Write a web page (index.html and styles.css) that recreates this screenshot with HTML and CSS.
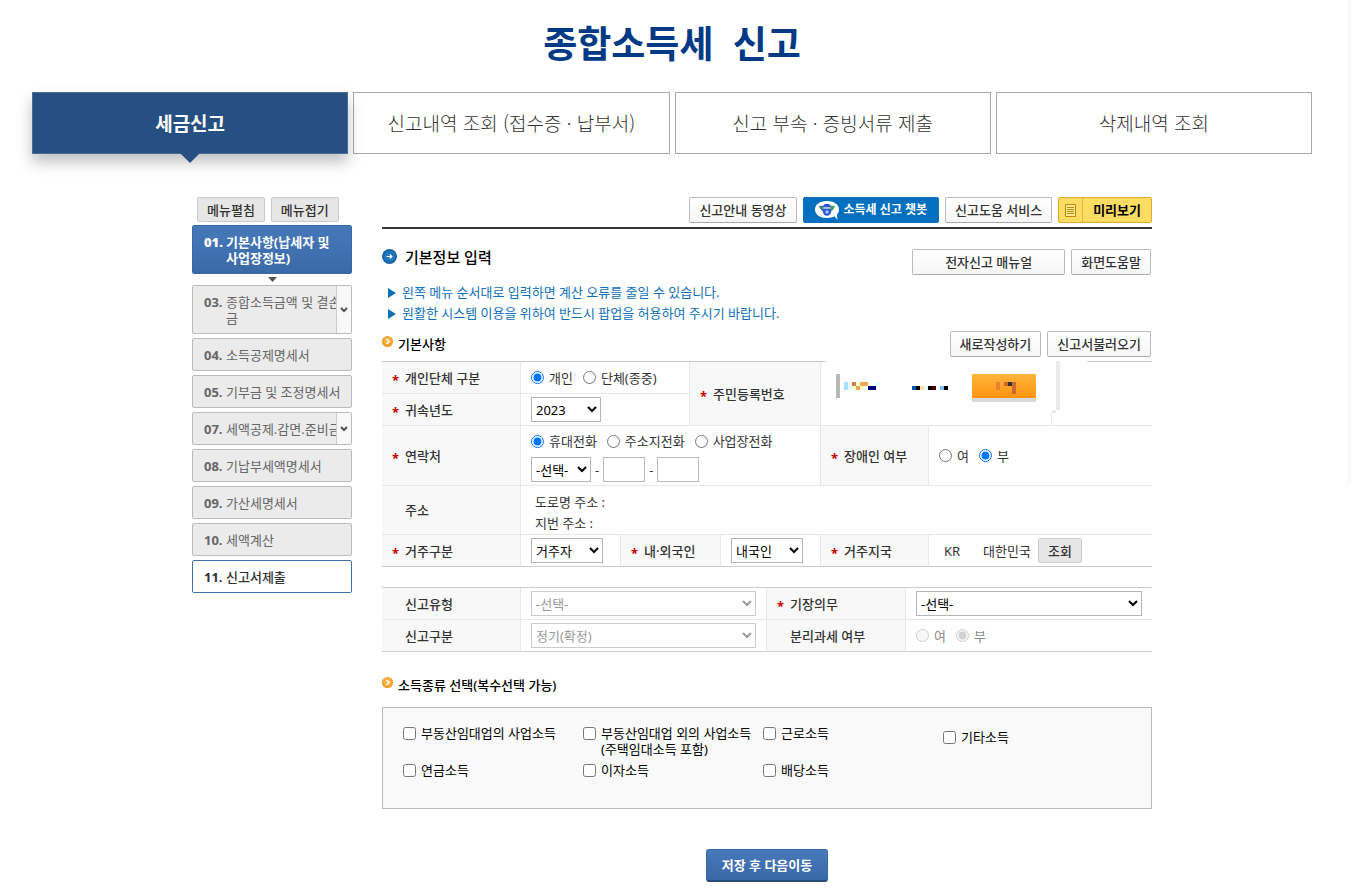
FILE: index.html
```html
<!DOCTYPE html>
<html lang="ko">
<head>
<meta charset="utf-8">
<title>종합소득세 신고</title>
<link rel="stylesheet" href="styles.css">
</head>
<body>
<div class="page">
  <h1 class="page-title">종합소득세&nbsp; 신고</h1>

  <nav class="tabs">
    <a class="tab tab-active" href="#">세금신고</a>
    <a class="tab" href="#">신고내역 조회 (접수증 · 납부서)</a>
    <a class="tab" href="#">신고 부속 · 증빙서류 제출</a>
    <a class="tab" href="#">삭제내역 조회</a>
  </nav>

  <div class="layout">
    <aside class="sidebar">
      <div class="side-tools">
        <button class="btn btn-gray" type="button">메뉴펼침</button>
        <button class="btn btn-gray" type="button">메뉴접기</button>
      </div>
      <ul class="steps">
        <li class="step-current">
          <a class="step step-active" href="#"><b class="num">01.</b><span class="step-name">기본사항(납세자 및 사업장정보)</span></a>
          <svg class="step-arrow" viewBox="0 0 9 5"><path d="M0 0h9L4.500 5z" fill="#555"/></svg>
        </li>
        <li><a class="step" href="#"><b class="num">03.</b><span class="step-name">종합소득금액 및 결손금</span><span class="expand"><svg viewBox="0 0 8 6"><path d="M1 1l3 3 3-3" fill="none" stroke="#555" stroke-width="2"/></svg></span></a></li>
        <li><a class="step" href="#"><b class="num">04.</b><span class="step-name">소득공제명세서</span></a></li>
        <li><a class="step" href="#"><b class="num">05.</b><span class="step-name">기부금 및 조정명세서</span></a></li>
        <li><a class="step" href="#"><b class="num">07.</b><span class="step-name">세액공제.감면.준비금</span><span class="expand"><svg viewBox="0 0 8 6"><path d="M1 1l3 3 3-3" fill="none" stroke="#555" stroke-width="2"/></svg></span></a></li>
        <li><a class="step" href="#"><b class="num">08.</b><span class="step-name">기납부세액명세서</span></a></li>
        <li><a class="step" href="#"><b class="num">09.</b><span class="step-name">가산세명세서</span></a></li>
        <li><a class="step" href="#"><b class="num">10.</b><span class="step-name">세액계산</span></a></li>
        <li><a class="step step-submit" href="#"><b class="num">11.</b><span class="step-name">신고서제출</span></a></li>
      </ul>
    </aside>

    <main class="content">
      <div class="toolbar">
        <button class="btn" type="button">신고안내 동영상</button>
        <button class="btn btn-chat" type="button">
          <svg class="bot" viewBox="0 0 24 20"><path d="M12 1C5 1 0 4.500 0 9.500S5 18 12 18c3 0 5.500-.6 7.500-1.700L22.500 20 22 14.500c1.300-1.400 2-3.100 2-5C24 4.500 19 1 12 1z" fill="#fff"/><path d="M4.500 6.500l4-.5 1 3-2.500 1.500z" fill="#3d9a63" stroke="#3456cf" stroke-width="1"/><path d="M19.500 6.500l-4-.5-1 3 2.500 1.500z" fill="#3d9a63" stroke="#3d9a63" stroke-width="1"/><path d="M8.500 6c0-3 7-3 7 0v1.500h-7z" fill="#344fd8"/><circle cx="12" cy="11.500" r="4.200" fill="#3155d6"/><path d="M8.500 8h7" stroke="#d6ecff" stroke-width="1.300"/><circle cx="12" cy="12" r="1.700" fill="#9cc9ff"/></svg>
          소득세 신고 챗봇</button>
        <button class="btn" type="button">신고도움 서비스</button>
        <button class="btn btn-preview" type="button">
          <span class="preview-icon"><svg viewBox="0 0 11 13"><path d="M.5.5h10v12H.5z" fill="#ffe98e" stroke="#b88b10"/><path d="M2 3.500h7M2 5.500h7M2 7.500h7M2 9.500h7" stroke="#b88b10"/></svg></span>
          <span class="preview-text">미리보기</span></button>
      </div>

      <div class="head">
        <h2 class="head-title">
          <svg class="head-icon" viewBox="0 0 15 15"><circle cx="7.500" cy="7.500" r="7.500" fill="#155f9f"/><circle cx="7.500" cy="7.500" r="6" fill="#1f78b8"/><path d="M4.500 7.500h5M7.800 5.500l2 2-2 2" fill="none" stroke="#fff" stroke-width="1.200"/></svg>
          기본정보 입력</h2>
        <div class="actions">
          <button class="btn btn-manual" type="button">전자신고 매뉴얼</button>
          <button class="btn" type="button">화면도움말</button>
        </div>
      </div>

      <ul class="notes">
        <li><svg viewBox="0 0 8 10"><path d="M0 0l8 5-8 5z" fill="#0f70b7"/></svg>왼쪽 메뉴 순서대로 입력하면 계산 오류를 줄일 수 있습니다.</li>
        <li><svg viewBox="0 0 8 10"><path d="M0 0l8 5-8 5z" fill="#0f70b7"/></svg>원활한 시스템 이용을 위하여 반드시 팝업을 허용하여 주시기 바랍니다.</li>
      </ul>

      <div class="subhead">
        <h3 class="sub-title">
          <svg class="sub-icon" viewBox="0 0 11 11"><circle cx="5.500" cy="5.500" r="5.500" fill="#f39a1f"/><circle cx="5.500" cy="5" r="4.300" fill="#fbb040"/><path d="M4.500 3l2.500 2.500L4.500 8" fill="none" stroke="#fff" stroke-width="1.500"/></svg>
          기본사항</h3>
        <div class="actions">
          <button class="btn" type="button">새로작성하기</button>
          <button class="btn" type="button">신고서불러오기</button>
        </div>
      </div>

      <table class="form">
        <colgroup><col class="c-head"><col class="c-100"><col class="c-69"><col class="c-31"><col class="c-100"><col class="c-108"><col></colgroup>
        <tr class="row">
          <th><span class="req">*</span>개인단체 구분</th>
          <td colspan="2"><div class="field">
            <label class="opt"><input type="radio" name="kind" checked>개인</label>
            <label class="opt"><input type="radio" name="kind">단체(종중)</label></div></td>
          <th colspan="2" rowspan="2"><span class="req">*</span>주민등록번호</th>
          <td class="masked-cell" colspan="2" rowspan="2">
            <svg class="masked" viewBox="826 361 261 64" shape-rendering="crispEdges">
              <defs><linearGradient id="orange" x1="0" y1="0" x2="0" y2="1"><stop offset="0" stop-color="#ffb53c"/><stop offset="1" stop-color="#ff9410"/></linearGradient></defs>
              <path d="M826 361h261v2H826z" fill="#fff"/>
              <path d="M836 374h4v24h-4z" fill="#b8b8b8"/>
              <path d="M844 382h4v8h-4z" fill="#a8e0ff"/>
              <path d="M848 386h4v4h-4zM876 382h4v4h-4z" fill="#e0ffff"/>
              <path d="M852 382h4v4h-4z" fill="#c88050"/>
              <path d="M856 382h4v4h-4zM852 386h4v4h-4zM860 386h4v4h-4z" fill="#ffffd0"/>
              <path d="M860 382h8v4h-8zM856 386h4v4h-4z" fill="#e8a850"/>
              <path d="M868 386h8v4h-8z" fill="#000080"/>
              <path d="M912 386h4v4h-4z" fill="#0055a8"/>
              <path d="M916 386h4v4h-4zM928 386h4v4h-4zM944 386h4v4h-4z" fill="#000"/>
              <path d="M920 386h4v4h-4z" fill="#ffe0a0"/><path d="M924 386h4v4h-4z" fill="#e0ffff"/>
              <path d="M932 386h4v4h-4z" fill="#500000"/><path d="M940 386h4v4h-4z" fill="#80c0ff"/>
              <path d="M972 374h64v24h-64z" fill="url(#orange)"/><path d="M972 398h64v4h-64z" fill="#d8d8d8"/>
              <path d="M996 382h4v8h-4z" fill="#f08030"/><path d="M1004 382h4v4h-4zM1012 382h4v12h-4z" fill="#cf6730"/>
              <path d="M1008 382h4v4h-4z" fill="#333"/>
              <path d="M1056 361h4v49h-4zM1052 410h4v3h-4zM1051 413h1v12h-1z" fill="#ebebeb"/>
            </svg>
          </td>
        </tr>
        <tr class="row">
          <th><label for="year"><span class="req">*</span>귀속년도</label></th>
          <td colspan="2"><div class="field"><select id="year" class="sel w-70"><option>2023</option></select></div></td>
        </tr>
        <tr class="row-contact">
          <th><span class="req">*</span>연락처</th>
          <td colspan="4">
            <div class="field stack">
              <div class="line">
                <label class="opt"><input type="radio" name="tel" checked>휴대전화</label>
                <label class="opt"><input type="radio" name="tel">주소지전화</label>
                <label class="opt"><input type="radio" name="tel">사업장전화</label>
              </div>
              <div class="line phone">
                <select class="sel w-60" aria-label="국번"><option>-선택-</option></select>-<input class="txt" type="text" aria-label="전화번호 앞자리">-<input class="txt" type="text" aria-label="전화번호 뒷자리">
              </div>
            </div>
          </td>
          <th><span class="req">*</span>장애인 여부</th>
          <td><div class="field">
            <label class="opt"><input type="radio" name="dis">여</label>
            <label class="opt"><input type="radio" name="dis" checked>부</label></div></td>
        </tr>
        <tr class="row-address">
          <th><span class="req"></span>주소</th>
          <td colspan="6" class="addr-cell"><p class="addr">도로명 주소 :</p><p class="addr">지번 주소 :</p></td>
        </tr>
        <tr class="row">
          <th><label for="reside"><span class="req">*</span>거주구분</label></th>
          <td><div class="field"><select id="reside" class="sel w-72"><option>거주자</option></select></div></td>
          <th colspan="2"><label for="nation"><span class="req">*</span>내·외국인</label></th>
          <td><div class="field"><select id="nation" class="sel w-72"><option>내국인</option></select></div></td>
          <th><span class="req">*</span>거주지국</th>
          <td><div class="field country"><span class="code">KR</span><span class="name">대한민국</span><button class="btn btn-gray" type="button">조회</button></div></td>
        </tr>
      </table>

      <table class="form form-type">
        <colgroup><col class="c-head"><col class="c-246"><col class="c-139"><col></colgroup>
        <tr class="row">
          <th><label for="type"><span class="req"></span>신고유형</label></th>
          <td><div class="field"><select id="type" class="sel w-full" disabled><option>-선택-</option></select></div></td>
          <th><label for="book"><span class="req">*</span>기장의무</label></th>
          <td><div class="field"><select id="book" class="sel w-full"><option>-선택-</option></select></div></td>
        </tr>
        <tr class="row">
          <th><label for="period"><span class="req"></span>신고구분</label></th>
          <td><div class="field"><select id="period" class="sel w-full" disabled><option>정기(확정)</option></select></div></td>
          <th><span class="req"></span>분리과세 여부</th>
          <td><div class="field">
            <label class="opt opt-off"><input type="radio" name="sep" disabled>여</label>
            <label class="opt opt-off"><input type="radio" name="sep" disabled checked>부</label></div></td>
        </tr>
      </table>

      <h3 class="sub-title sub-income">
        <svg class="sub-icon" viewBox="0 0 11 11"><circle cx="5.500" cy="5.500" r="5.500" fill="#f39a1f"/><circle cx="5.500" cy="5" r="4.300" fill="#fbb040"/><path d="M4.500 3l2.500 2.500L4.500 8" fill="none" stroke="#fff" stroke-width="1.500"/></svg>
        소득종류 선택(복수선택 가능)</h3>

      <div class="income">
        <label class="check"><input type="checkbox"><span>부동산임대업의 사업소득</span></label>
        <label class="check"><input type="checkbox"><span>부동산임대업 외의 사업소득<br>(주택임대소득 포함)</span></label>
        <label class="check"><input type="checkbox"><span>근로소득</span></label>
        <label class="check check-other"><input type="checkbox"><span>기타소득</span></label>
        <label class="check"><input type="checkbox"><span>연금소득</span></label>
        <label class="check"><input type="checkbox"><span>이자소득</span></label>
        <label class="check"><input type="checkbox"><span>배당소득</span></label>
      </div>

      <div class="submit"><button class="btn-next" type="button">저장 후 다음이동</button></div>
    </main>
  </div>
</div>
</body>
</html>
```
FILE: styles.css
```css
* { box-sizing: border-box; }

body {
  margin: 0;
  background: #fff;
  color: #333;
  font: 13px/16px "Noto Sans", "Noto Sans CJK KR", sans-serif;
}

ul, h1, h2, h3, p { margin: 0; padding: 0; }
ul { list-style: none; }
a { color: inherit; text-decoration: none; }
svg { display: block; flex: none; }
button, input, select { font: inherit; color: inherit; margin: 0; }

.page { position: relative; padding: 0 39px 0 32px; }
.page::after {
  content: "";
  position: absolute;
  top: 0;
  right: 0;
  width: 6px;
  height: 484px;
  background: linear-gradient(to right, #fff, #f7f7f7);
}

.page-title {
  padding: 17px 0 21px;
  font-size: 37px;
  line-height: 54px;
  font-weight: 700;
  color: #003a85;
  text-align: center;
}

/* top tabs */
.tabs { display: grid; grid-template-columns: repeat(4, 1fr); gap: 5px; }
.tab {
  display: flex;
  align-items: center;
  justify-content: center;
  height: 62px;
  border: 1px solid #a9a9a9;
  background: #fff;
  font-family: "Noto Sans CJK KR", sans-serif;
  font-size: 19px;
  line-height: 28px;
  font-weight: 300;
}
.tab-active {
  position: relative;
  border-color: #4a6d98;
  background: #265081;
  color: #fff;
  font-weight: 700;
  box-shadow: 0 8px 14px rgba(0, 0, 0, .25);
}
.tab-active::after {
  content: "";
  position: absolute;
  top: 100%;
  left: 50%;
  margin-left: -10px;
  border: 10px solid transparent;
  border-top-color: #265081;
  border-bottom: 0;
}

.layout {
  display: grid;
  grid-template-columns: 160px minmax(0, 1fr);
  column-gap: 30px;
  max-width: 960px;
  margin: 43px auto 0;
}

/* buttons */
.btn {
  display: inline-flex;
  align-items: center;
  justify-content: center;
  height: 26px;
  padding: 0 9px;
  border: 1px solid #bbb;
  border-bottom-color: #aaa;
  border-radius: 2px;
  background: linear-gradient(#fff, #f6f6f6);
  font-weight: 500;
  white-space: nowrap;
}
.btn-gray { height: 25px; background: #e6e6e6; border-color: #ccc; }
.btn-manual { width: 153px; }
.btn-chat {
  gap: 5px;
  padding: 0 11px;
  border-color: #0a6db5;
  background: #0070be;
  color: #fff;
  font-size: 12px;
  font-weight: 700;
}
.btn-preview { padding: 0; border-color: #e0a92f; background: #ffdc62; color: #000; font-weight: 700; }
.preview-icon {
  display: flex;
  align-items: center;
  align-self: stretch;
  padding: 0 6px;
  border-right: 1px solid #eeb540;
}
.preview-icon svg { width: 11px; height: 13px; }
.preview-text { padding: 0 10px; }
.bot { width: 24px; height: 20px; }

/* sidebar */
.side-tools { display: flex; gap: 6px; padding-left: 5px; margin-bottom: 3px; }
.steps { display: flex; flex-direction: column; gap: 4px; }
.step {
  position: relative;
  display: flex;
  padding: 8px 4px 7px 11px;
  border: 1px solid #bbb;
  border-radius: 2px;
  background: #ebebeb;
  color: #666;
  overflow: hidden;
}
.num { flex: none; width: 22px; }
.step-name { flex: 1; word-break: break-all; }
.step-active {
  border-color: #3a68a6;
  background: linear-gradient(#4678b9, #3b6aa8);
  color: #fff;
  font-weight: 700;
}
.step-active .step-name { word-break: keep-all; }
.step-submit { border-color: #3b72b0; background: #fff; color: #333; font-weight: 500; }
.step-arrow { width: 9px; height: 5px; margin: 3px auto -1px; }
.expand {
  position: absolute;
  top: 0;
  right: 0;
  bottom: 0;
  display: flex;
  align-items: center;
  justify-content: center;
  width: 15px;
  border-left: 1px solid #ccc;
  background: #f8f8f8;
}
.expand svg { width: 8px; height: 6px; }

/* content header */
.toolbar {
  display: flex;
  justify-content: flex-end;
  gap: 6px;
  padding-bottom: 4px;
  border-bottom: 2px solid #333;
}
.head, .subhead { display: flex; justify-content: space-between; padding-right: 1px; }
.head { margin-top: 20px; }
.actions { display: flex; gap: 6px; }
.head-title {
  display: flex;
  gap: 8px;
  font-size: 15px;
  line-height: 16px;
  font-weight: 500;
  color: #000;
}
.head-icon { width: 15px; height: 15px; }
.notes { margin-top: 7px; color: #0f70b7; line-height: 21px; }
.notes li { display: flex; align-items: center; gap: 6px; padding-left: 6px; }
.notes svg { width: 8px; height: 10px; }
.subhead { margin-top: 7px; }
.sub-title {
  display: flex;
  gap: 5px;
  padding-top: 5px;
  font-size: 13px;
  line-height: 16px;
  font-weight: 500;
  color: #000;
}
.sub-icon { width: 11px; height: 11px; }

/* form tables */
.form {
  width: 100%;
  margin-top: 4px;
  table-layout: fixed;
  border-collapse: separate;
  border-spacing: 0;
  border-top: 1px solid #ccc;
}
.form th, .form td { padding: 0 10px; border-bottom: 1px solid #e8e8e8; text-align: left; }
.form th { background: #f8f8f8; font-weight: 500; white-space: nowrap; }
.form th + td, .form td + th { border-left: 1px solid #e8e8e8; }
.form tr:last-child th, .form tr:last-child td { border-bottom-color: #ccc; }
.form-type { margin-top: 20px; }
.c-head { width: 138px; }
.c-246 { width: 246px; }
.c-139 { width: 139px; }
.c-100 { width: 100px; }
.c-69 { width: 69px; }
.c-31 { width: 31px; }
.c-108 { width: 108px; }
.row { height: 32px; }
.row-contact { height: 60px; }
.row-address { height: 49px; }
.req {
  display: inline-block;
  width: 13px;
  height: 12px;
  vertical-align: middle;
  font-weight: 700;
  line-height: 14px;
  color: #c00;
}
.field, .line { display: flex; align-items: center; gap: 10px; }
.stack { flex-direction: column; align-items: flex-start; gap: 8px; padding-top: 4px; }
.phone { gap: 4px; }
.opt { display: flex; align-items: center; gap: 5px; white-space: nowrap; }
.opt input, .check input { width: 13px; height: 13px; flex: none; }
.opt-off { color: #888; }
.sel {
  height: 25px;
  padding: 0;
  border: 1px solid #b5b5b5;
  border-radius: 0;
  background-color: #fff;
  color: #000;
}
.sel:disabled { border-color: #ccc; color: #999; opacity: 1; }
.txt { width: 42px; height: 25px; padding: 0 4px; border: 1px solid #bbb; }
.w-60 { width: 60px; }
.w-70 { width: 70px; }
.w-72 { width: 72px; }
.w-full { width: 100%; }
.form .addr-cell { padding-top: 5px; }
.addr { padding-left: 4px; line-height: 21px; }
.country { gap: 0; padding-left: 5px; }
.code { width: 39px; }
.name { width: 55px; }
.masked-cell { position: relative; }
.masked { position: absolute; top: -1px; left: 5px; width: 261px; height: 64px; }

/* income types */
.sub-income { margin-top: 20px; }
.income {
  display: grid;
  grid-template-columns: repeat(4, 180px);
  align-items: start;
  row-gap: 5px;
  margin-top: 14px;
  padding: 17px 0 30px 20px;
  border: 1px solid #bbb;
  background: #f9f9f9;
  color: #000;
}
.check { display: flex; gap: 5px; white-space: nowrap; }
.check input { margin-top: 2px; }
.check-other { padding-top: 4px; }

.submit { display: flex; justify-content: center; padding: 40px 0 8px; }
.btn-next {
  height: 33px;
  padding: 0 15px;
  border: 1px solid #3a68a6;
  border-bottom: 2px solid #2a4b78;
  border-radius: 3px;
  background: linear-gradient(#4779bb, #3a68a6);
  color: #fff;
  font-weight: 700;
}
```
